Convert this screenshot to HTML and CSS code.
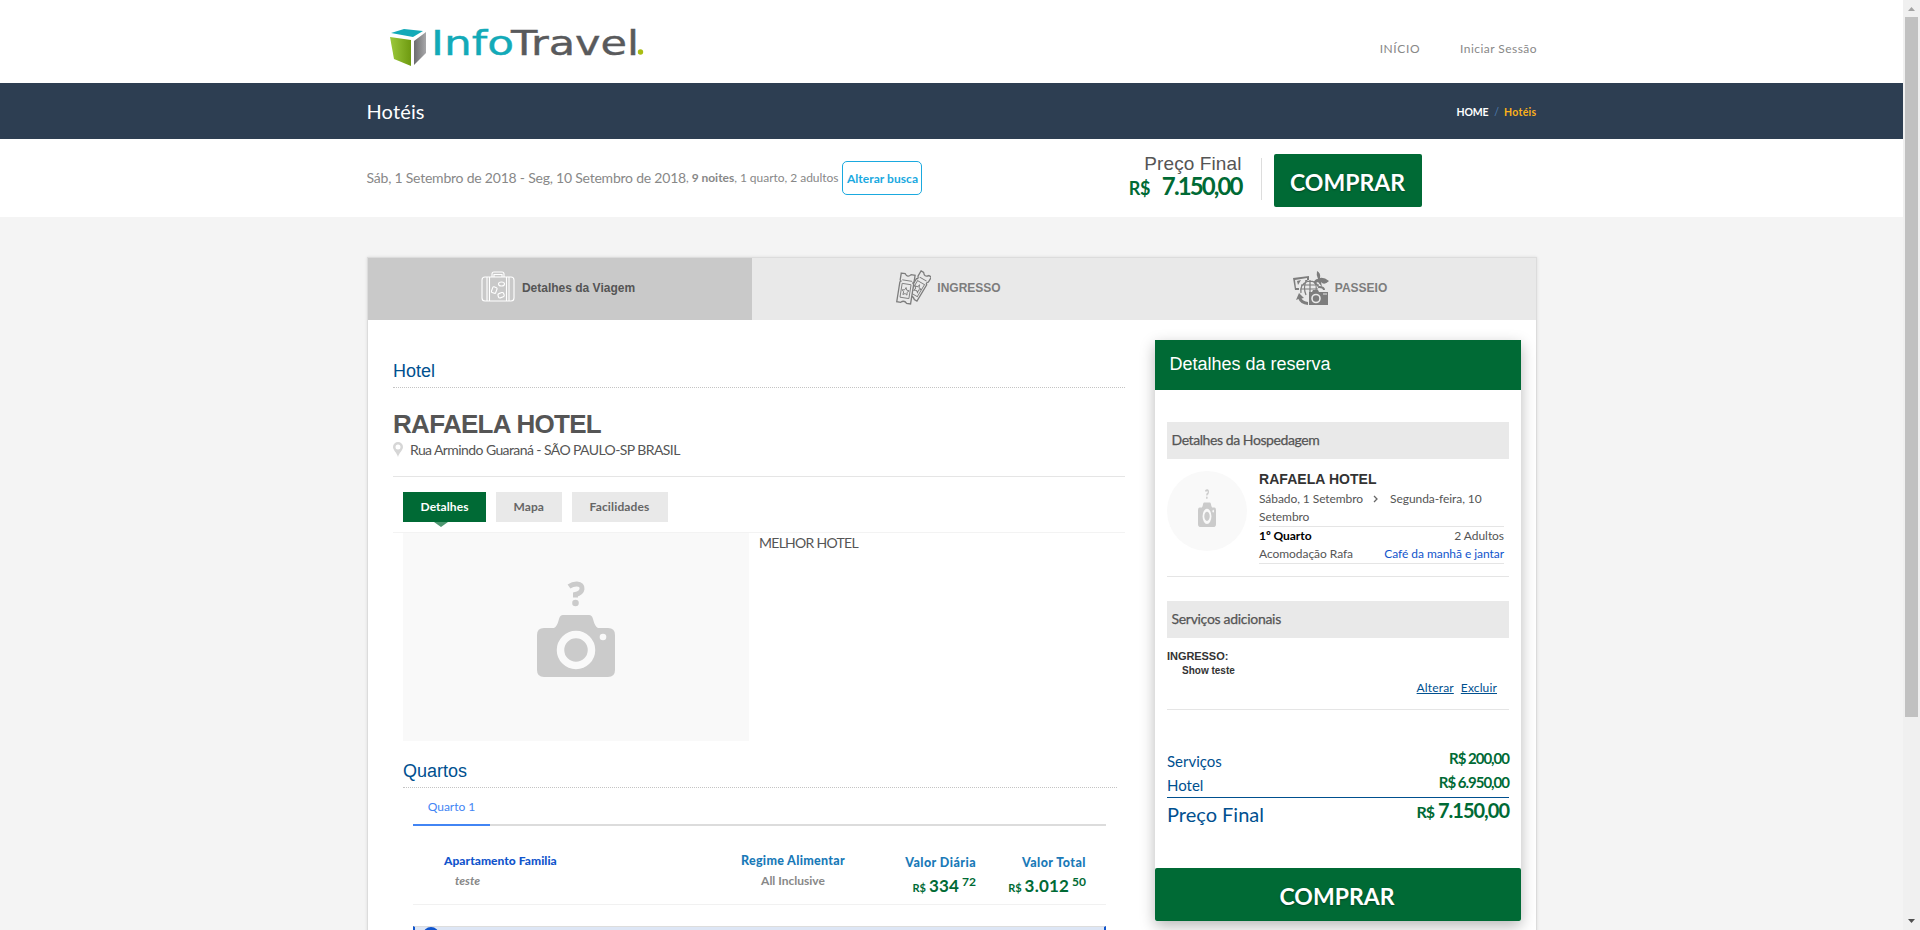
FILE: index.html
```html
<!DOCTYPE html>
<html lang="pt-BR">
<head>
<meta charset="utf-8">
<title>InfoTravel - Hotéis</title>
<link rel="stylesheet" href="styles.css">
</head>
<body>
<svg width="0" height="0" class="defs">
  <symbol id="camera" viewBox="0 0 78 96">
    <path d="M32 5.500Q36 2.800 40 3Q45.500 3.500 45 8Q44.500 12 38.500 13.500V16.500" fill="none" stroke="#cbcbcb" stroke-width="5"/>
    <circle cx="38.500" cy="22" r="3.300" fill="#cbcbcb"/>
    <path d="M7 47H17Q20 46 22 38Q23 34 26 34H52Q55 34 56 38Q58 46 61 47H71Q78 47 78 54V89Q78 96 71 96H7Q0 96 0 89V54Q0 47 7 47Z" fill="#cbcbcb"/>
    <circle cx="39" cy="69" r="15.500" fill="none" stroke="#f9f9f9" stroke-width="7.500"/>
    <circle cx="66" cy="56" r="3.300" fill="#f9f9f9"/>
  </symbol>
</svg>
<div class="app">
<div class="page">
  <header class="top wrap">
    <svg class="logo" width="260" height="48" viewBox="0 -8 260 48">
      <defs>
        <linearGradient id="lg"><stop offset="0" stop-color="#9cc93c"/><stop offset="1" stop-color="#6e9a10"/></linearGradient>
        <linearGradient id="gg"><stop offset="0" stop-color="#6c6c6e"/><stop offset="1" stop-color="#a8a8aa"/></linearGradient>
      </defs>
      <path d="M1 5 14 1 33 3 23 9Z" fill="#13aab8"/>
      <path d="M0 9 21 12V38L4 31Z" fill="url(#lg)"/>
      <path d="M24 13 36 4V25L24 37Z" fill="url(#gg)"/>
      <text class="logo-t" x="41" y="26.500" textLength="83" lengthAdjust="spacingAndGlyphs" fill="#13aab8" stroke="#13aab8">Info</text>
      <text class="logo-t" x="121" y="26.500" textLength="128" lengthAdjust="spacingAndGlyphs" fill="#595a5c" stroke="#595a5c">Travel</text>
      <circle cx="250.500" cy="24" r="2.700" fill="#a9bd12"/>
    </svg>
    <nav class="nav"><a>INÍCIO</a><a class="login">Iniciar Sessão</a></nav>
  </header>
  <div class="title-bar"><div class="wrap row">
    <h1>Hotéis</h1>
    <div class="crumbs"><b>HOME</b><i>/</i><b class="cur">Hotéis</b></div>
  </div></div>
  <div class="search"><div class="wrap search-in">
    <div class="query"><span class="dates">Sáb, 1 Setembro de 2018 - Seg, 10 Setembro de 2018</span><span class="guests">, <b>9 noites</b>, 1 quarto, 2 adultos</span><a class="alter">Alterar busca</a></div>
    <div class="final"><div class="final-l">Preço Final</div><div class="final-v"><small>R$</small><span>7.150,00</span></div></div>
    <div class="sep"></div>
    <a class="buy">COMPRAR</a>
  </div></div>

  <div class="card">
    <div class="steps">
      <div class="step on">
        <svg width="36" height="32" viewBox="0 0 36 32" fill="none" stroke="#fff" stroke-width="1.100"><rect x="2" y="6" width="32" height="24" rx="3"/><path d="M7 6V30M9.500 6V30M26.500 6V30M29 6V30M12 6V3Q12 1 14 1H22Q24 1 24 3V6M14 6V3.500H22V6"/><ellipse cx="21.500" cy="13" rx="3" ry="2"/><rect x="12" y="16" width="4.500" height="6" rx="1" transform="rotate(20 14 19)"/><rect x="18" y="22" width="6" height="4.500" rx="1.500" transform="rotate(-20 21 24)"/></svg>
        <span>Detalhes da Viagem</span>
      </div>
      <div class="step">
        <svg width="36" height="36" viewBox="0 0 36 36" fill="#e9e9e9" stroke="#7d7d7d" stroke-width="1.300"><g transform="rotate(31 24 16)"><path d="M18 2H21Q24 6 27 2H30V8Q28 10 30 11V30H27Q24 27 21 30H18V11Q20 10 18 8Z"/><path d="M20 12H28V26H20ZM20 8H28" stroke-width=".9"/><path d="m24 15 1 2.500 2.500.3-1.800 1.900.4 2.700-2.100-1.300-2.100 1.300.4-2.700-1.800-1.900 2.500-.3Z" stroke-width=".9"/></g><g transform="rotate(9 11 18)"><path d="M4 4H8Q11 8 14 4H18V11Q16 12 18 13V33H14Q11 30 8 33H4V13Q6 12 4 11Z"/><path d="M6.500 14H15.500V28H6.500ZM6 10.500H16" stroke-width=".9"/><path d="m11 17.500 1 2.500 2.500.3-1.800 1.900.4 2.700-2.100-1.300-2.100 1.300.4-2.700-1.800-1.900 2.500-.3Z" stroke-width=".9"/></g></svg>
        <span>INGRESSO</span>
      </div>
      <div class="step tour">
        <svg width="36" height="34" viewBox="0 0 36 34" fill="#7d7d7d"><path fill-rule="evenodd" d="M0 7 16 5V9H14V7L2 9 3 17H6V19H2Z"/><path d="m4 10 4-1-3 5ZM12 9l3 0-2 2Z"/><g fill="none" stroke="#7d7d7d" stroke-width="1.200"><path d="M8 22A9 9 0 1 1 26 17M17 9V22M8 14H26M8 18H25M13 10Q10 17 13 24M21 10Q24 14 23 20"/></g><path d="M24 0Q28 2 27 7Q31 6 36 10Q31 15 28 11L29 16 25 11 21 13Q21 8 25 8Q23 4 24 0ZM6 22 11 27 8.500 27.500Q10 30 15 31V34Q7 33 5.500 28L3 29Z"/><path d="M16 21H19L20 19H25L26 21H35V34H16Z"/><circle cx="23" cy="27.500" r="4" stroke="#e9e9e9" stroke-width="1.600"/><path d="M30 23H34" stroke="#e9e9e9"/><path d="M26 16Q31 16 31 19" stroke="#7d7d7d" stroke-width="2" fill="none"/></svg>
        <span>PASSEIO</span>
      </div>
    </div>
    <div class="cols">
      <main class="left">
        <h2 class="sec">Hotel</h2>
        <h3 class="hotel">RAFAELA HOTEL</h3>
        <div class="addr"><svg width="10" height="15" viewBox="0 0 10 15"><path d="M5 15C4 11 0 8 0 5A5 5 0 0 1 10 5C10 8 6 11 5 15ZM5 2.500A2.500 2.500 0 1 0 5 7.500 2.500 2.500 0 1 0 5 2.500Z" fill="#d6d6d6" fill-rule="evenodd"/></svg><span>Rua Armindo Guaraná - SÃO PAULO-SP BRASIL</span></div>
        <div class="tabs"><a class="tab act">Detalhes</a><a class="tab">Mapa</a><a class="tab last">Facilidades</a></div>
        <div class="detail"><div class="photo"><svg width="78" height="96"><use href="#camera"/></svg></div><span class="desc">MELHOR HOTEL</span></div>
        <div class="rooms">
          <h2 class="sec q">Quartos</h2>
          <div class="room-tabs"><a>Quarto 1</a></div>
          <div class="room">
            <div class="c1"><b>Apartamento Familia</b><em>teste</em></div>
            <div class="c2"><b>Regime Alimentar</b><span>All Inclusive</span></div>
            <div class="c3"><b>Valor Diária</b><div class="amt"><small>R$</small><span>334</span><sup>72</sup></div></div>
            <div class="c4"><b>Valor Total</b><div class="amt"><small>R$</small><span>3.012</span><sup>50</sup></div></div>
          </div>
          <div class="notice"><i></i></div>
        </div>
      </main>
      <aside class="side">
        <div class="side-h">Detalhes da reserva</div>
        <div class="side-b">
          <div class="bar">Detalhes da Hospedagem</div>
          <div class="stay">
            <div class="thumb"><svg width="18" height="38" preserveAspectRatio="none" viewBox="0 0 78 96"><use href="#camera" width="78" height="96"/></svg></div>
            <div class="stay-i">
              <div class="name">RAFAELA HOTEL</div>
              <div class="when">Sábado, 1 Setembro<svg width="6" height="8" viewBox="0 0 6 8"><path d="M1 1 4 4 1 7" fill="none" stroke="#666" stroke-width="1.300"/></svg>Segunda-feira, 10<br>Setembro</div>
              <div class="rm"><div><b>1º Quarto</b><span>2 Adultos</span></div><div><span>Acomodação Rafa</span><a>Café da manhã e jantar</a></div></div>
            </div>
          </div>
          <div class="bar two">Serviços adicionais</div>
          <div class="extra"><b>INGRESSO:</b><strong>Show teste</strong><div class="links"><a>Alterar</a><a>Excluir</a></div></div>
          <div class="sum"><span>Serviços</span><b>R$ 200,00</b></div>
          <div class="sum"><span>Hotel</span><b>R$ 6.950,00</b></div>
          <div class="sum total"><span>Preço Final</span><b><small>R$</small> 7.150,00</b></div>
        </div>
        <a class="buy wide">COMPRAR</a>
      </aside>
    </div>
  </div>
</div>
<div class="scroll">
  <svg width="7" height="4"><path d="M0 4 3.500 0 7 4Z" fill="#a3a3a3"/></svg>
  <div class="thumb-bar"></div>
  <svg class="dn" width="7" height="4"><path d="M0 0H7L3.500 4Z" fill="#505050"/></svg>
</div>
</div>
</body>
</html>
```
FILE: styles.css
```css
* { box-sizing: border-box; }
html, body { margin: 0; height: 930px; overflow: hidden; }
body { font-family: Lato, sans-serif; font-size: 12px; color: #555; background: #f4f4f4; }
h1, h2, h3 { margin: 0; font-weight: 400; }
i { font-style: normal; }
.defs { display: none; }
svg { display: block; flex: none; }
.app { display: flex; height: 930px; overflow: hidden; }
.page { width: 1903px; flex: none; background: linear-gradient(#fff 217px, #f4f4f4 217px); }
.wrap { width: 1170px; margin: 0 auto; }

.top { display: flex; justify-content: space-between; height: 83px; }
.page > .top { padding: 20px 0 0 23px; }
.logo { overflow: visible; }
.logo-t { font-family: "DejaVu Sans", sans-serif; font-size: 34px; font-weight: 400; stroke-width: .4; }
.nav { display: flex; gap: 40px; padding-top: 19px; font-size: 12px; line-height: 20px; color: #888; letter-spacing: .45px; }
.nav a:first-child { letter-spacing: .6px; }
.nav a:last-child { margin-right: -.5px; }

.title-bar { height: 56px; background: #2d3e52; }
.row { display: flex; justify-content: space-between; align-items: center; height: 56px; }
h1 { font-size: 20px; line-height: 56px; color: #fff; letter-spacing: .15px; }
.crumbs { display: flex; padding-top: 1px; font-size: 10.500px; color: #fff; }
.crumbs b { letter-spacing: -.2px; }
.crumbs i { margin: 0 5px 0 6px; color: #4f7fb5; }
.crumbs .cur { color: #fbb11b; letter-spacing: .3px; }

.search-in { display: flex; height: 78px; }
.query { display: flex; align-items: center; width: 748px; padding-bottom: 1px; white-space: pre; color: #888; }
.dates { font-size: 14px; line-height: 20px; letter-spacing: -.22px; }
.guests { line-height: 20px; padding-top: 1px; letter-spacing: -.03px; }
.alter { margin-left: 4px; width: 80px; height: 34px; border: 1px solid #1aa9df; border-radius: 5px; text-align: center; line-height: 33px; font-weight: 700; color: #1aa9df; letter-spacing: .05px; }
.final { width: 127px; padding-top: 14px; text-align: right; }
.final-l { font: 19px/22px "Liberation Sans", sans-serif; letter-spacing: .1px; }
.final-v { display: flex; justify-content: flex-end; align-items: baseline; gap: 12px; height: 24px; line-height: 22px; color: #006a35; font-weight: 700; letter-spacing: -1.9px; }
.final-v small { font-size: 18px; letter-spacing: -.5px; }
.final-v span { font-size: 24px; }
.sep { width: 1px; height: 42px; margin: 19px 12px 0 19px; background: #ddd; }
.buy { display: block; width: 148px; height: 53px; margin-top: 15px; border-radius: 2px; background: #006a35; color: #fff; font-size: 23px; font-weight: 700; line-height: 57px; text-align: center; text-shadow: 0 1px 2px rgba(0,0,0,.35); }

.card { width: 1170px; height: 700px; margin: 40px 0 0 367px; background: #fff; border: 1px solid #dcdcdc; box-shadow: 0 0 3px rgba(0,0,0,.1); }
.steps { display: flex; height: 62px; background: #e9e9e9; }
.step { display: flex; flex: none; gap: 6px; align-items: center; justify-content: center; width: 392px; padding-bottom: 2px; font: 700 12px "Liberation Sans", sans-serif; color: #7d7d7d; }
.step.on { width: 384px; padding-right: 5px; padding-bottom: 4px; background: #c9c9c9; color: #555; }
.step span { padding-bottom: 1px; }
.step.on span { padding: 1px 0 0; }
.cols { display: flex; justify-content: space-between; padding: 20px 15px 0 25px; }
.left { width: 732px; }
.sec { height: 48px; border-bottom: 1px dotted #c4c4c4; font: 18px/22px "Liberation Sans", sans-serif; color: #00508f; padding-top: 20px; }
.hotel { height: 34px; margin-top: 19px; font: 700 26px/34px "Liberation Sans", sans-serif; letter-spacing: -.7px; }
.addr { display: flex; align-items: center; gap: 7px; height: 36px; padding-bottom: 18px; border-bottom: 1px solid #e5e5e5; font-size: 14px; letter-spacing: -.59px; white-space: nowrap; }
.tabs { display: flex; gap: 10px; height: 56px; padding: 15px 10px 0; border-bottom: 1px solid #f3f3f3; }
.tab { position: relative; height: 30px; padding: 0 17.500px; background: #e9e9e9; font-weight: 700; line-height: 30px; color: #666; letter-spacing: .08px; }
.tab.last { padding: 0 18px; letter-spacing: .15px; }
.act { background: #006a35; color: #fff; }
.act::after { content: ""; position: absolute; left: 31px; top: 30px; border: 7px solid transparent; border-top: 5px solid #4c9770; border-bottom: 0; }
.detail { display: flex; gap: 10px; padding-left: 10px; font-size: 14px; }
.photo { width: 346px; height: 208px; padding: 48px 0 0 134px; background: #f9f9f9; }
.desc { line-height: 20px; letter-spacing: -.72px; }
.rooms { padding: 0 8px 0 10px; }
.q { height: 47px; padding-top: 19px; }
.room-tabs { display: flex; height: 38px; margin: 0 11px 0 10px; border-bottom: 2px solid #dcdcdc; }
.room-tabs a { width: 77px; height: 38px; border-bottom: 2px solid #4285f4; text-align: center; color: #4285f4; line-height: 38px; }
.room { display: flex; height: 79px; margin: 0 11px 0 10px; border-bottom: 1px solid #f1f1f1; color: #888; font-weight: 700; }
.room > div { display: flex; flex-direction: column; padding-top: 25px; line-height: 20px; }
.room b { color: #1a7ab8; font-size: 12.500px; letter-spacing: .3px; }
.room .c1 { width: 313px; padding-left: 31px; }
.c1 em { padding-left: 11px; }
.room .c1 b { color: #1155cc; font-size: 12px; letter-spacing: .05px; }
.c2 { width: 134px; text-align: center; }
.room .c3 { width: 116px; padding-top: 27px; text-align: right; }
.room .c4 { width: 110px; padding-top: 27px; text-align: right; }
.room .c3 b, .room .c4 b { letter-spacing: .45px; }
.amt { display: flex; justify-content: flex-end; align-items: baseline; gap: 3px; height: 24px; line-height: 26px; color: #006a35; }
.amt small { font-size: 11px; }
.amt span { font-size: 17px; letter-spacing: .2px; }
.amt sup { position: relative; top: -6px; font-size: 12px; line-height: 1; vertical-align: 0; }
.notice { height: 40px; margin: 21px 11px 0 10px; border: 2px solid #1155cc; border-top: 1px solid #ddd; background: #dde6f5; }
.notice i { display: block; width: 16px; height: 16px; margin: 0 0 0 8px; border-radius: 50%; background: #1155cc; }

.side { width: 366px; height: 581px; box-shadow: 0 5px 14px rgba(0,0,0,.28); background: #fff; }
.side-h { height: 50px; padding-left: 14.500px; background: #006a35; color: #fff; font: 18px/48px "Liberation Sans", sans-serif; }
.side-b { height: 478px; padding: 32px 12px 0; }
.bar { height: 37px; padding-left: 4.500px; background: #e9e9e9; font-size: 14px; line-height: 36px; letter-spacing: -.42px; -webkit-text-stroke: .25px #555; }
.stay { display: flex; gap: 12px; height: 118px; padding-top: 12px; border-bottom: 1px solid #e5e5e5; }
.thumb { display: flex; align-items: flex-start; justify-content: center; width: 80px; height: 80px; padding-top: 18px; border-radius: 50%; background: #f9f9f9; }
.stay-i { width: 245px; }
.name { font: 700 14px/16px "Liberation Sans", sans-serif; color: #333; letter-spacing: .05px; }
.when { height: 40px; padding-top: 3px; line-height: 18px; letter-spacing: -.07px; white-space: nowrap; border-bottom: 1px solid #e5e5e5; }
.when svg { display: inline-block; margin: 0 11px 0 10px; }
.rm { height: 37px; border-bottom: 1px solid #e5e5e5; letter-spacing: -.05px; }
.rm > div { display: flex; justify-content: space-between; line-height: 18px; white-space: nowrap; }
.rm b { color: #000; }
.rm a { color: #1155cc; }
.two { margin-top: 24px; letter-spacing: -.3px; }
.extra { display: flex; flex-direction: column; height: 72px; padding-top: 11px; border-bottom: 1px solid #e5e5e5; font-family: "Liberation Sans", sans-serif; color: #333; }
.extra b { font-size: 11px; line-height: 15px; letter-spacing: -.05px; }
.extra strong { padding-left: 15px; font-size: 10px; line-height: 14px; }
.links { display: flex; justify-content: flex-end; gap: 7px; padding-right: 12px; font: 12px/20px Lato, sans-serif; color: #00508f; letter-spacing: .15px; }
.links a { text-decoration: underline; }
.sum { display: flex; justify-content: space-between; height: 24px; font-size: 15px; line-height: 24px; color: #00508f; }
.extra + .sum { margin-top: 39px; }
.sum b { color: #006a35; letter-spacing: -1px; line-height: 18px; font-size: 15px; }
.total { height: 40px; border-top: 1px solid #00508f; font-size: 20px; line-height: 33px; }
.total b { font-size: 20px; line-height: 24px; }
.total small { font-size: 16px; }
.wide { width: 366px; margin: 0; padding-right: 2px; }

.scroll { display: flex; flex-direction: column; align-items: center; width: 17px; height: 930px; padding: 7px 0 7px; background: #f0f0f0; }
.thumb-bar { width: 13px; height: 700px; margin-top: 6px; background: #c1c1c1; }
.dn { margin-top: auto; }
```
